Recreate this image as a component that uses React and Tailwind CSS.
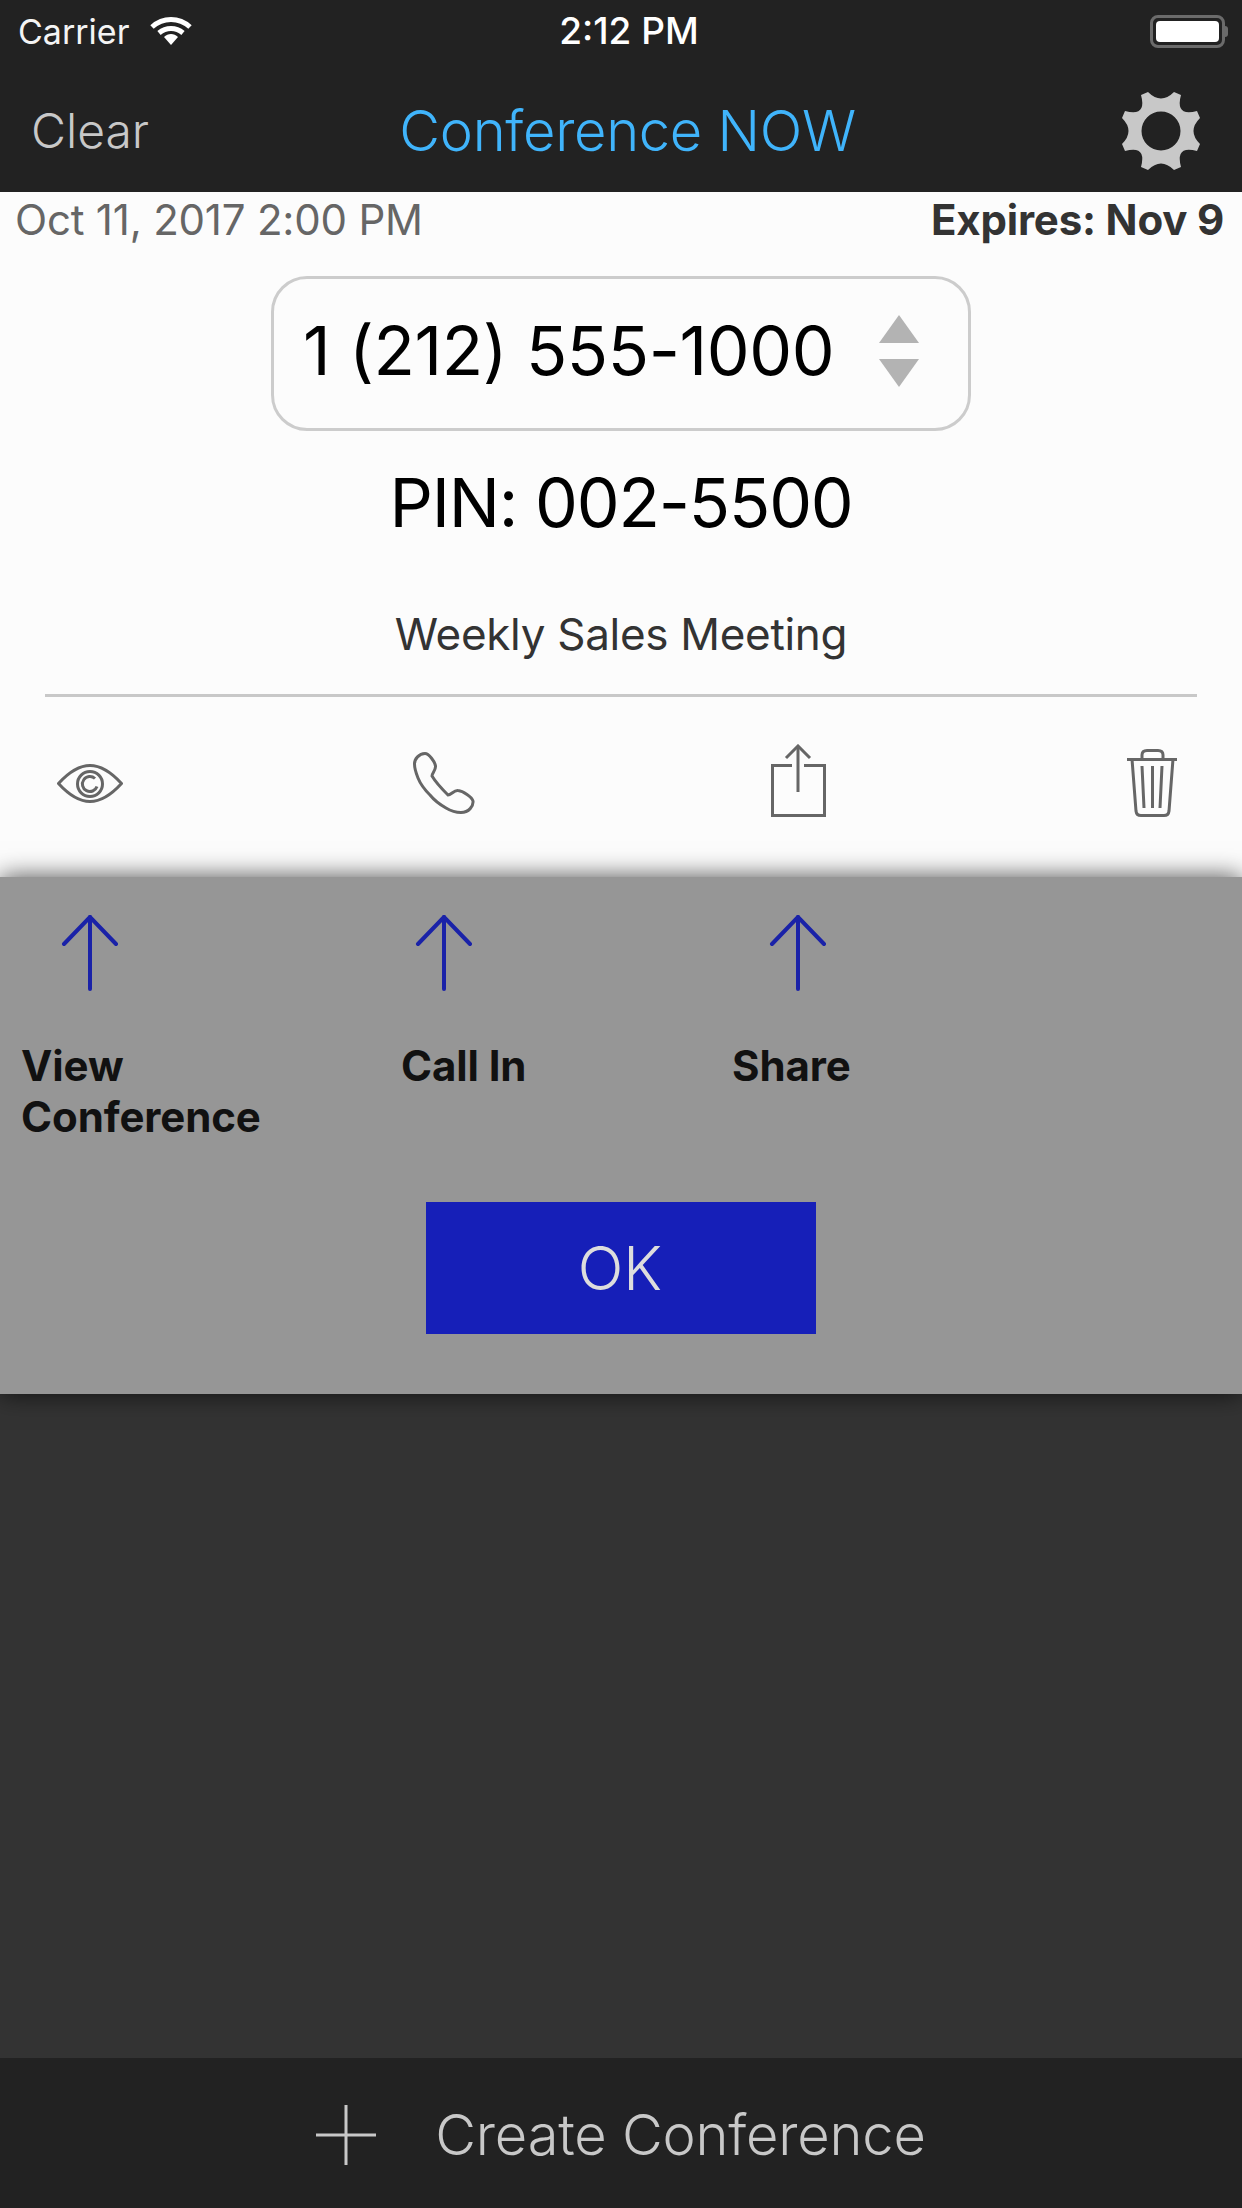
import React from 'react';

const font = { fontFamily: 'Inter, "Liberation Sans", sans-serif' };

function WifiIcon() {
  return (
    <svg width="42" height="28" viewBox="0 0 42 28">
      <path d="M2 10 C13 0 29 0 40 10" fill="none" stroke="#fff" strokeWidth="5" />
      <path d="M9 16 C16 10 26 10 33 16" fill="none" stroke="#fff" strokeWidth="5" />
      <path d="M14 20 C18 16 24 16 28 20 L21 28 Z" fill="#fff" />
    </svg>
  );
}

function Battery() {
  return (
    <div className="flex items-center">
      <div className="w-[75px] h-[33px] rounded-[8px] border-[3px] border-[#6b6b6b] p-[3px]">
        <div className="w-full h-full rounded-[4px] bg-white" />
      </div>
      <div className="w-[3px] h-[11px] rounded-r bg-[#6b6b6b]" />
    </div>
  );
}

function GearIcon() {
  return (
    <svg width="80" height="80" viewBox="0 0 80 80">
      <path
        fillRule="evenodd"
        fill="#c8c8c8"
        d="M27 1 Q40 14 53 1 L60 4 Q54 26 76 20 L79 27 Q66 40 79 53 L76 60 Q54 54 60 76 L53 79 Q40 66 27 79 L20 76 Q26 54 4 60 L1 53 Q14 40 1 27 L4 20 Q26 26 20 4 Z M40 20.5 A19.5 19.5 0 1 0 40 59.5 A19.5 19.5 0 1 0 40 20.5 Z"
      />
    </svg>
  );
}

function EyeIcon() {
  return (
    <svg width="66" height="39" viewBox="0 0 66 39" fill="none" stroke="#666" strokeWidth="3">
      <path d="M1.5 19.5 C12 8 22 1.5 33 1.5 C44 1.5 54 8 64.5 19.5 C54 31 44 37.5 33 37.5 C22 37.5 12 31 1.5 19.5 Z" />
      <circle cx="33" cy="20" r="12.5" />
      <path d="M38 14.5 A7.5 7.5 0 1 0 40 22.5" />
    </svg>
  );
}

function PhoneIcon() {
  return (
    <svg width="62" height="62" viewBox="0 0 62 62" fill="none" stroke="#666" strokeWidth="3">
      <path d="M12 1.5 C16 1.5 22 10 22.5 14 C23 18 19 21 19 24 C22 29 30 38 35 43 C38 43 41 38 45 38.5 C50 39 59 45 60 49 C60.5 54 56 60.5 48 60.5 C43 60.5 38 59 33 56 C26 52 21 48 17 43 C11 37 7 31 5 26 C3 21 1.5 16 1.5 12 C1.5 7 6 1.5 12 1.5 Z" />
    </svg>
  );
}

function ShareIcon() {
  return (
    <svg width="55" height="73" viewBox="0 0 55 73" fill="none" stroke="#666" strokeWidth="3">
      <path d="M21 21.5 H1.5 V71.5 H53.5 V21.5 H33" />
      <path d="M27 48 V2" />
      <path d="M15 14 L27 2 L39 14" />
    </svg>
  );
}

function TrashIcon() {
  return (
    <svg width="50" height="68" viewBox="0 0 50 68" fill="none" stroke="#666" strokeWidth="3">
      <path d="M0 10.5 H50" />
      <path d="M15 10 V6 Q15 1.5 20 1.5 H31 Q36 1.5 36 6 V10" />
      <path d="M5 10 L9 62 Q9.5 66.5 14 66.5 H37 Q41.5 66.5 42 62 L46 10" />
      <path d="M15 17 L17 59 M25.5 17 V59 M35 17 L33 59" />
    </svg>
  );
}

function UpArrow() {
  return (
    <svg width="60" height="76" viewBox="0 0 60 76" fill="none" stroke="#1a22a8" strokeWidth="4" strokeLinecap="round">
      <path d="M30 74 V2" />
      <path d="M4 29 L30 2 L56 29" />
    </svg>
  );
}

export default function App() {
  return (
    <div style={font} className="w-[1242px] h-[2208px] flex flex-col bg-[#333] overflow-hidden">
      {/* Header */}
      <div className="h-[192px] shrink-0 bg-[#222]">
        <div className="h-[62px] grid grid-cols-3 items-center pl-[18px] pr-[14px] text-white text-[34px]">
          <div className="flex items-center gap-[21px]">
            <span className="text-[#f4f4f4]">Carrier</span>
            <WifiIcon />
          </div>
          <div className="text-center font-medium text-[37px] pl-[12px]">2:12 PM</div>
          <div className="flex justify-end">
            <Battery />
          </div>
        </div>
        <div className="h-[130px] pt-[8px] flex items-center justify-between pl-[31px] pr-[41px]">
          <span className="text-[48px] font-light text-[#c8c8c8]">Clear</span>
          <span className="mr-[15px] text-[56px] tracking-[-0.3px] font-light text-[#40b4fb]">Conference NOW</span>
          <GearIcon />
        </div>
      </div>

      {/* Conference card */}
      <div className="h-[685px] shrink-0 bg-[#fcfcfc]">
        <div className="flex justify-between pl-[15px] pr-[18px] pt-[5px] text-[42px] leading-[46px] tracking-[-0.2px]">
          <span className="text-[#666]">Oct 11, 2017 2:00 PM</span>
          <span className="font-bold text-[#333]">Expires: Nov 9</span>
        </div>
        <div className="mt-[33px] mx-auto w-[700px] h-[155px] rounded-[36px] border-[3px] border-[#ccc] flex items-start pl-[29px] pt-[30px]">
          <span className="text-[68px] leading-[82px] tracking-[-0.4px] text-black">1 (212) 555-1000</span>
          <div className="ml-[45px] mt-[6px] flex flex-col gap-[16px]">
            <div className="w-0 h-0 border-l-[20px] border-r-[20px] border-b-[28px] border-l-transparent border-r-transparent border-b-[#b3b3b3]" />
            <div className="w-0 h-0 border-l-[20px] border-r-[20px] border-t-[28px] border-l-transparent border-r-transparent border-t-[#b3b3b3]" />
          </div>
        </div>
        <div className="mt-[30px] text-center text-[68px] leading-[82px] tracking-[-1.2px] text-black">PIN: 002-5500</div>
        <div className="mt-[64px] text-center text-[44px] leading-[54px] tracking-[-0.3px] text-[#333]">Weekly Sales Meeting</div>
        <div className="mt-[33px] mx-[45px] h-[3px] bg-[#c8c8c8]" />
        <div className="mt-[47px] px-[50px] flex justify-between items-center h-[78px]">
          <div className="w-[80px] flex justify-center"><EyeIcon /></div>
          <div className="w-[80px] flex justify-center"><PhoneIcon /></div>
          <div className="w-[80px] flex justify-center mb-[5px]"><ShareIcon /></div>
          <div className="w-[80px] flex justify-center"><TrashIcon /></div>
        </div>
      </div>

      {/* Help overlay */}
      <div className="h-[517px] shrink-0 bg-[#969696] shadow-[0_0_24px_rgba(0,0,0,0.7)] z-10">
        <div className="pt-[38px] px-[50px] flex justify-between">
          <div className="w-[80px] flex justify-center"><UpArrow /></div>
          <div className="w-[80px] flex justify-center"><UpArrow /></div>
          <div className="w-[80px] flex justify-center"><UpArrow /></div>
          <div className="w-[80px]" />
        </div>
        <div className="mt-[49px] h-[102px] flex text-[42px] leading-[51px] tracking-[-0.1px] font-bold text-[#111]">
          <div className="w-[401px] pl-[21px]">View<br />Conference</div>
          <div className="w-[331px]">Call In</div>
          <div>Share</div>
        </div>
        <div className="mt-[60px] mx-auto w-[390px] h-[132px] bg-[#161fb8] flex items-center justify-center pr-[2px] text-[60px] font-light text-[#ddd]">
          OK
        </div>
      </div>

      <div className="flex-1" />

      {/* Bottom bar */}
      <div className="h-[150px] shrink-0 bg-[#222] flex items-center justify-center gap-[59px] pt-[4px]">
        <svg width="60" height="60" viewBox="0 0 60 60" stroke="#c8c8c8" strokeWidth="3">
          <path d="M30 0 V60 M0 30 H60" />
        </svg>
        <span className="text-[56px] tracking-[-0.2px] font-light text-[#c8c8c8]">Create Conference</span>
      </div>
    </div>
  );
}
